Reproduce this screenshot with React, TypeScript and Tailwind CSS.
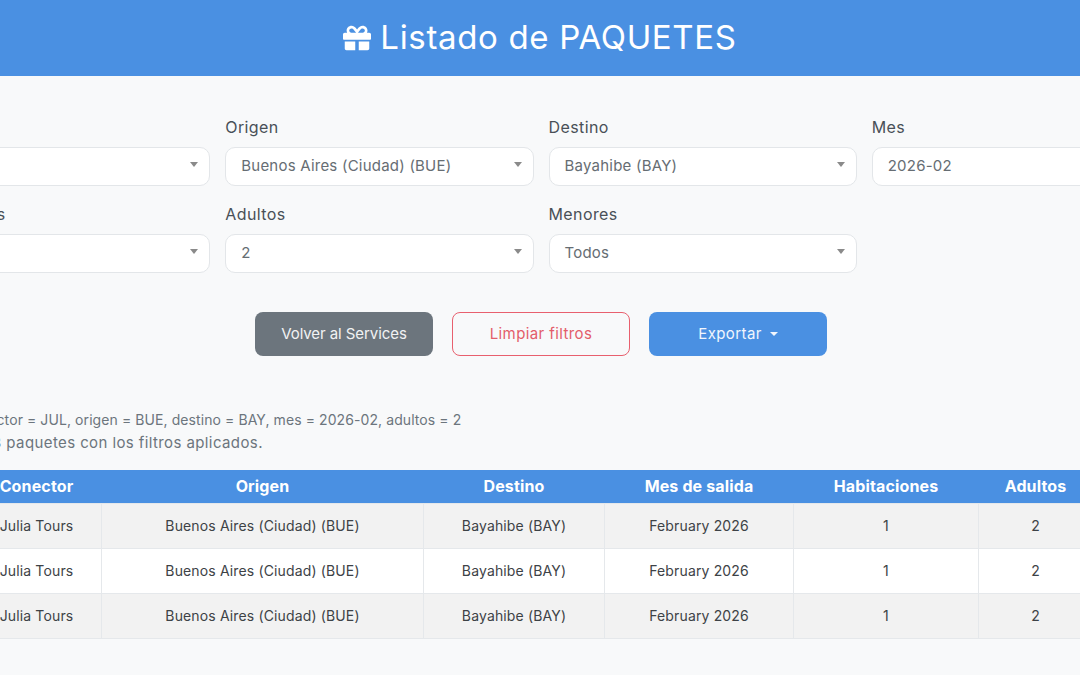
import { FaGift } from "react-icons/fa";

function Caret() {
  return (
    <svg width="8" height="5" viewBox="0 0 8 5" className="mb-[4px] shrink-0 text-[#8a8a8a]">
      <path d="M0 0h8L4 5z" fill="currentColor" />
    </svg>
  );
}

function Field({ label, value, caret = true }: { label: string; value: string; caret?: boolean }) {
  return (
    <div className="flex flex-col">
      <label className="h-[32px] text-[16px] leading-[24px] text-[#495057] whitespace-nowrap">{label}</label>
      <div className="flex h-[39px] items-center justify-between rounded-[10px] border border-[#e3e6e9] bg-white pl-[15px] pr-[11px] text-[15px] tracking-[0.015em] text-[#666d73]">
        <span className="whitespace-nowrap">{value}</span>
        {caret && <Caret />}
      </div>
    </div>
  );
}

const colClasses = ["w-[130px]", "w-[322px]", "w-[181px]", "w-[189px]", "w-[185px]", "w-[114px]"];
const heads = ["Conector", "Origen", "Destino", "Mes de salida", "Habitaciones", "Adultos"];
const row = ["Julia Tours", "Buenos Aires (Ciudad) (BUE)", "Bayahibe (BAY)", "February 2026", "1", "2"];

export default function App() {
  return (
    <div className="h-[675px] w-[1080px] overflow-hidden bg-[#f8f9fa] font-['Inter','Liberation_Sans',sans-serif] tracking-[0.025em]">
      <header className="flex h-[76px] items-center justify-center gap-[9px] bg-[#4a90e2] text-[33px] tracking-[0.02em] text-white">
        <FaGift className="text-[28px]" />
        <h1>Listado de PAQUETES</h1>
      </header>

      <section className="ml-[-98px] mt-[39px] grid w-[1278px] grid-cols-4 gap-x-[15px] gap-y-[16px]">
        <Field label="Conector" value="JUL" />
        <Field label="Origen" value="Buenos Aires (Ciudad) (BUE)" />
        <Field label="Destino" value="Bayahibe (BAY)" />
        <Field label="Mes" value="2026-02" caret={false} />
        <Field label="Habitaciones" value="1" />
        <Field label="Adultos" value="2" />
        <Field label="Menores" value="Todos" />
      </section>

      <div className="mt-[39px] flex justify-center gap-[19px] pl-[2px] text-[15px]">
        <button className="h-[44px] w-[178px] rounded-[8px] bg-[#6c757d] tracking-[-0.005em] text-[#f1f2f3]">Volver al Services</button>
        <button className="h-[44px] w-[178px] rounded-[8px] border border-[#e8606e] text-[#e35d6a]">Limpiar filtros</button>
        <button className="flex h-[44px] w-[178px] items-center justify-center gap-[8px] rounded-[8px] bg-[#4a90e2] text-[#f1f6fd]">
          Exportar
          <svg width="8" height="4" viewBox="0 0 8 4"><path d="M0 0h8L4 4z" fill="currentColor" /></svg>
        </button>
      </div>

      <p className="ml-[-86px] mt-[53px] h-[22px] whitespace-nowrap text-[14px] leading-[21px] tracking-[0.006em] text-[#6c757d]">
        Filtros: conector = JUL, origen = BUE, destino = BAY, mes = 2026-02, adultos = 2
      </p>
      <p className="ml-[-127px] h-[25px] whitespace-nowrap text-[15px] leading-[24px] text-[#6c757d]">
        Se encontraron 3 paquetes con los filtros aplicados.
      </p>

      <table className="ml-[-29px] mt-[14px] w-[1121px] table-fixed border-collapse text-[14px] tracking-[0.01em]">
        <colgroup>
          {colClasses.map((c) => (
            <col key={c} className={c} />
          ))}
        </colgroup>
        <thead>
          <tr className="h-[33px] bg-[#4a90e2] text-white">
            {heads.map((h) => (
              <th key={h} className="text-[16px] font-bold">{h}</th>
            ))}
          </tr>
        </thead>
        <tbody>
          {[0, 1, 2].map((r) => (
            <tr key={r} className={r % 2 === 0 ? "h-[45px] bg-[#f2f2f2]" : "h-[45px] bg-white"}>
              {row.map((c, i) => (
                <td key={i} className="border border-[#e5e8eb] text-center text-[#3d4246]">{c}</td>
              ))}
            </tr>
          ))}
        </tbody>
      </table>
    </div>
  );
}
